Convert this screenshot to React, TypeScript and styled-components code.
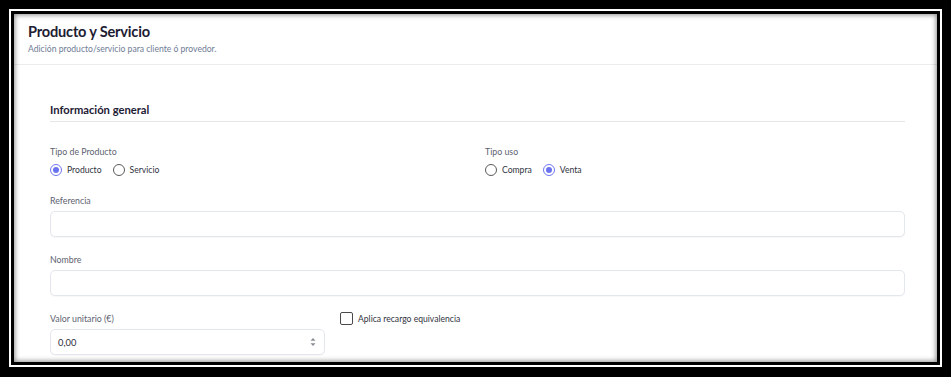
import React from 'react';
import { styled, createGlobalStyle } from 'styled-components';

const GlobalStyle = createGlobalStyle`
  html, body {
    margin: 0;
    padding: 0;
    background: #000;
  }
  body {
    font-family: Lato, 'Noto Sans', sans-serif;
    width: 951px;
    height: 377px;
    overflow: hidden;
  }
  * {
    box-sizing: border-box;
  }
`;

const Frame = styled.div`
  background: #000;
  padding: 9px 9px 10px 9px;
  height: 377px;
`;

const FrameLine = styled.div`
  border: 2px solid #fff;
  height: 100%;
`;

const FrameInner = styled.div`
  border: 3px solid #000;
  height: 100%;
`;

const Screen = styled.div`
  position: relative;
  height: 100%;
  overflow: hidden;
  background: #fff;

  &::after {
    content: '';
    position: absolute;
    inset: 0;
    pointer-events: none;
    box-shadow: inset 0 0 5px 1px rgba(0, 0, 0, 0.45);
  }
`;

const Header = styled.header`
  height: 51px;
  padding: 9px 14px 0;
  border-bottom: 1px solid #ececec;
  background: #fff;
`;

const Title = styled.h1`
  margin: 0;
  font-size: 14.6px;
  line-height: 18px;
  font-weight: 700;
  color: #1d2033;
  letter-spacing: -0.2px;
`;

const Subtitle = styled.p`
  margin: 3px 0 0;
  font-size: 8.6px;
  line-height: 11px;
  color: #6f7c95;
`;

const Body = styled.div`
  padding: 38px 32px 0 36px;
`;

const SectionTitle = styled.h2`
  margin: 0;
  padding-bottom: 4px;
  font-size: 11.2px;
  line-height: 14px;
  font-weight: 700;
  color: #1d2033;
  border-bottom: 1px solid #e6e6e6;
`;

const Row = styled.div<{ $cols: number; $top?: number }>`
  display: grid;
  grid-template-columns: repeat(${(p) => p.$cols}, 1fr);
  column-gap: 15px;
  margin-top: ${(p) => p.$top ?? 17}px;
`;

const Field = styled.div`
  display: flex;
  flex-direction: column;
  gap: 4px;
`;

const Label = styled.label`
  font-size: 8.8px;
  line-height: 12px;
  color: #5e6270;
`;

const RadioRow = styled.div`
  display: flex;
  align-items: center;
  gap: 11px;
  height: 14px;
  margin-top: 1px;
`;

const RadioOption = styled.span`
  display: flex;
  align-items: center;
  gap: 5px;
  font-size: 8.6px;
  color: #2f3240;
`;

const RadioDot = styled.span<{ $checked?: boolean }>`
  width: 12px;
  height: 12px;
  border-radius: 50%;
  border: 1.3px solid ${(p) => (p.$checked ? '#7077f2' : '#5a5a5a')};
  display: flex;
  align-items: center;
  justify-content: center;

  &::after {
    content: '';
    width: 6px;
    height: 6px;
    border-radius: 50%;
    background: #6c73f0;
    display: ${(p) => (p.$checked ? 'block' : 'none')};
  }
`;

const InputBox = styled.div`
  height: 26px;
  border: 1px solid #e3e6ec;
  border-radius: 5px;
  background: #fff;
  box-shadow: 0 1px 1px rgba(20, 30, 60, 0.03);
  display: flex;
  align-items: center;
  padding: 0 7px;
  font-size: 9.3px;
  color: #2b2d38;
`;

const Spinner = styled.svg`
  margin-left: auto;
  margin-right: 1px;
  color: #8a8d96;
`;

const CheckRow = styled.div`
  display: flex;
  align-items: center;
  gap: 5px;
  height: 13px;
  margin-top: -1px;
  font-size: 8.6px;
  color: #2f3240;
`;

const CheckBox = styled.span`
  width: 13px;
  height: 13px;
  border: 1.3px solid #4a4a4a;
  border-radius: 2px;
`;

const App = () => {
  return (
    <>
      <GlobalStyle />
      <Frame>
        <FrameLine>
          <FrameInner>
            <Screen>
              <Header>
                <Title>Producto y Servicio</Title>
                <Subtitle>Adición producto/servicio para cliente ó provedor.</Subtitle>
              </Header>
              <Body>
                <SectionTitle>Información general</SectionTitle>

                <Row $cols={2} $top={24}>
                  <Field>
                    <Label>Tipo de Producto</Label>
                    <RadioRow>
                      <RadioOption>
                        <RadioDot $checked />
                        Producto
                      </RadioOption>
                      <RadioOption>
                        <RadioDot />
                        Servicio
                      </RadioOption>
                    </RadioRow>
                  </Field>
                  <Field>
                    <Label>Tipo uso</Label>
                    <RadioRow>
                      <RadioOption>
                        <RadioDot />
                        Compra
                      </RadioOption>
                      <RadioOption>
                        <RadioDot $checked />
                        Venta
                      </RadioOption>
                    </RadioRow>
                  </Field>
                </Row>

                <Row $cols={1} $top={18}>
                  <Field>
                    <Label>Referencia</Label>
                    <InputBox />
                  </Field>
                </Row>

                <Row $cols={1}>
                  <Field>
                    <Label>Nombre</Label>
                    <InputBox />
                  </Field>
                </Row>

                <Row $cols={3}>
                  <Field>
                    <Label>Valor unitario (€)</Label>
                    <InputBox>
                      0,00
                      <Spinner width="6" height="10" viewBox="0 0 6 10">
                        <path d="M3 1 L5.5 3.8 H0.5 Z" fill="currentColor" />
                        <path d="M3 9 L5.5 6.2 H0.5 Z" fill="currentColor" />
                      </Spinner>
                    </InputBox>
                  </Field>
                  <Field>
                    <CheckRow>
                      <CheckBox />
                      Aplica recargo equivalencia
                    </CheckRow>
                  </Field>
                </Row>
              </Body>
            </Screen>
          </FrameInner>
        </FrameLine>
      </Frame>
    </>
  );
};

export default App;
